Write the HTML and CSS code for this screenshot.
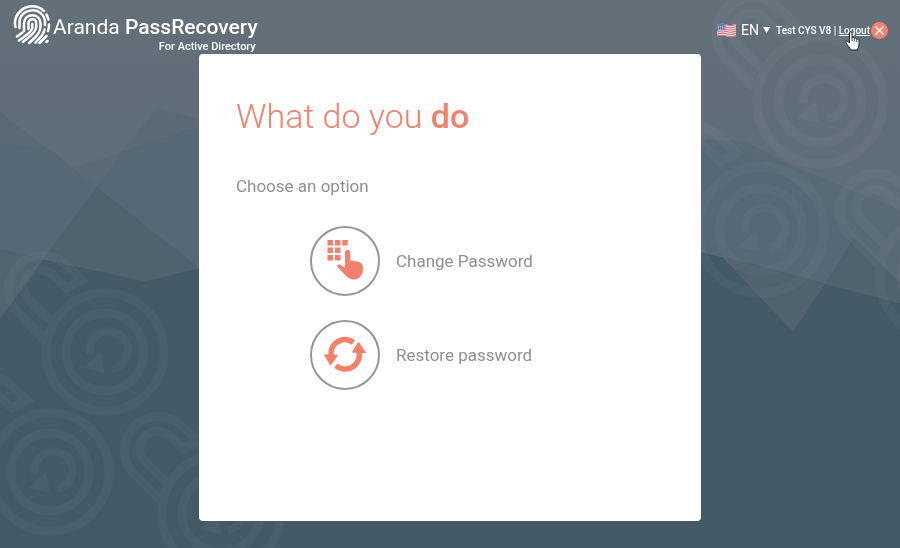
FILE: index.html
```
<!DOCTYPE html>
<html lang="en">
<head>
    <meta charset="UTF-8">
    <meta name="viewport" content="width=device-width, initial-scale=1.0">
    <title>Aranda PassRecovery</title>
    <link rel="stylesheet" href="styles.css">
</head>
<body>

    <!-- Background -->
    <svg class="backdrop" viewBox="0 0 900 548" preserveAspectRatio="xMidYMid slice" aria-hidden="true">
        <defs>
            <linearGradient id="sky" x1="0" y1="0" x2="0" y2="1">
                <stop offset="0" stop-color="#636f79"/>
                <stop offset="1" stop-color="#5c6c78"/>
            </linearGradient>
            <g id="swirl" fill="none" stroke="#fff" stroke-width="9">
                <circle r="59"/>
                <circle r="39"/>
                <path stroke-width="8" d="M7 17A19 19 0 1 0 -15 2"/>
                <path fill="#fff" stroke="none" d="M-22 16L-4 0L0 21Z"/>
                <path d="M-61 -13L-88 -40A34 34 0 0 1 -40 -88L-23 -72L-38 -64L-52 -77A17 17 0 0 0 -76 -52L-55 -31"/>
            </g>
        </defs>
        <rect width="900" height="548" fill="#445a67"/>
        <path fill="url(#sky)" d="M0 0H900V303L760 266L701 252L450 200L199 268L145 281L43 259L0 249Z"/>
        <path fill="#5a6974" d="M0 112L97 187L43 259L0 249Z"/>
        <path fill="#546875" d="M0 144L50 149L97 187L43 259L0 249Z"/>
        <path fill="#5b6a75" d="M97 187L75 168L120 153L157 108L199 119V268Z"/>
        <path fill="#546875" d="M97 187L122 152L199 127V268Z"/>
        <path fill="#4f626e" d="M97 187L199 268L145 281L43 259Z"/>
        <path fill="#51646f" d="M0 249L43 259L14 300L0 318Z"/>
        <path fill="#586a76" d="M701 140L745 141L790 165L900 210V303L760 266L701 252Z"/>
        <path fill="#546875" d="M701 146L745 150L790 180L854 238L825 284L760 266L701 252Z"/>
        <path fill="#4f626e" d="M854 238L900 282V303L825 284Z"/>
        <path fill="#4f626e" d="M722 257L760 266L825 284L793 332Z"/>
        <g opacity=".035">
            <use href="#swirl" x="105" y="352"/>
            <use href="#swirl" x="50" y="472"/>
            <use href="#swirl" x="221" y="513"/>
            <use href="#swirl" transform="translate(820 101) scale(1.07)"/>
            <use href="#swirl" transform="translate(761 230) scale(1.07)"/>
            <use href="#swirl" transform="translate(943 277) scale(1.07)"/>
        </g>
    </svg>

    <!-- Header -->
    <header class="header">
        <div class="brand">
            <svg class="brand-icon" viewBox="0 0 38 42" aria-hidden="true">
                <g fill="none" stroke="#fff" stroke-width="2.5" stroke-linecap="round">
                    <path d="M2.500 23C1 17 3 11 8 6.500C14 1 24 .5 31 7"/>
                    <path d="M33.500 10.500L35.500 15.500"/>
                    <path d="M6.500 24V18C7 3 31 2 32 18V21"/>
                    <path d="M36 20.500C36 23 35.700 25 35 27"/>
                    <path d="M11 27V19C11.500 8.500 27 8.500 27.500 19V23C27 29 24 32 16 39"/>
                    <path d="M31.500 25.500C30.500 30 29 32 22.500 38.500"/>
                    <path d="M15.500 25V19C15.500 14 23.200 14 23.200 19V23C23 27 20 30 10 38"/>
                    <path d="M19.300 20V24C18.500 27.500 15 30 6 36.500"/>
                    <path d="M4 32.500L9.500 28.500"/>
                    <path d="M26.500 39L33.500 32M33.500 38L34.500 37"/>
                </g>
            </svg>
            <div class="brand-text">
                <div class="brand-name">Aranda <strong>PassRecovery</strong></div>
                <div class="brand-sub">For Active Directory</div>
            </div>
        </div>

        <div class="tools">
            <svg class="flag" viewBox="0 0 19 15" aria-hidden="true">
                <path fill="#e9dcdf" d="M0 2Q5 0 9.500 1.500T19 1V13Q14 14.500 9.500 13T0 13Z"/>
                <path fill="none" stroke="#d4757b" stroke-width="1.100" d="M0 2.500Q5 .5 9.500 2T19 1.500M0 4.700Q5 2.700 9.500 4.200T19 3.700M0 6.900Q5 4.900 9.500 6.400T19 5.900M0 9.100Q5 7.100 9.500 8.600T19 8.100M0 11.300Q5 9.300 9.500 10.800T19 10.300M0 13Q5 11.500 9.500 13T19 12.500"/>
                <path fill="#6d7cae" d="M0 2Q5 0 8.500 1.200V7.500Q5 6 0 8Z"/>
                <path fill="none" stroke="#c5cce0" stroke-width=".7" stroke-dasharray="1 1" d="M1 3.500L8 2.800M1 5L8 4.300M1 6.500L8 5.800"/>
            </svg>
            <select class="language" aria-label="Language">
                <option>EN</option>
                <option>ES</option>
            </select>
            <svg class="caret" viewBox="0 0 7 6" aria-hidden="true"><path fill="#fff" d="M0 0H7L3.500 6Z"/></svg>
            <div class="session">Test CYS V8 | <a class="logout" href="#">Logout</a></div>
            <button class="close" type="button" aria-label="Close session">
                <svg viewBox="0 0 17 17" aria-hidden="true">
                    <circle cx="8.500" cy="8.500" r="8.500" fill="#f4836b"/>
                    <path stroke="#fff" stroke-width="1.500" stroke-linecap="round" d="M5 5L12 12M12 5L5 12"/>
                </svg>
            </button>
            <svg class="pointer" viewBox="0 0 15 20" aria-hidden="true">
                <path fill="#fff" stroke="#15202b" stroke-width="1" stroke-linejoin="round" d="M4.500 12V2C4.500 .2 7 .2 7 2V7C7.500 5.800 9.300 6 9.300 7.500C10 6.500 11.700 7 11.700 8.500C12.500 7.700 14 8.300 14 9.800V13.500C14 16 12.500 17 12.500 19H5.500C5 16.500 2.500 14.500 1 11.800C.3 10 2.500 9.500 3.500 11Z"/>
                <path stroke="#15202b" stroke-width=".8" d="M7 7V10M9.300 8V10.500M11.700 9V11"/>
            </svg>
        </div>
    </header>

    <!-- Options -->
    <main class="card">
        <h1>What do you <strong>do</strong></h1>
        <p class="hint">Choose an option</p>
        <div class="options">
            <button class="option" type="button">
                <span class="option-icon">
                    <svg viewBox="2 2 66 66" aria-hidden="true">
                        <g fill="#f4806a">
                            <path d="M17.500 14h5.500v5.500h-5.500zM25 14h5.500v5.500h-5.500zM32.300 14h5.500v5.500h-5.500zM17.500 21.500h5.500v5.500h-5.500zM25 21.500h5.500v5.500h-5.500zM17.500 29h5.500v5.500h-5.500zM25 29h5.500v5.500h-5.500z"/>
                            <path d="M35 42V26.500C35 22.800 40.200 22.800 40.200 26.500V34.500L47 35.500C51 36 53 38.500 53 42C53 46 52 49 49.500 51.500C46 54.500 41 54 38 51.500C34 48.500 31 44 27.500 41C26.500 39 28.500 38 30.500 39Z"/>
                        </g>
                    </svg>
                </span>
                Change Password
            </button>
            <button class="option" type="button">
                <span class="option-icon">
                    <svg viewBox="2 2 66 66" aria-hidden="true">
                        <g fill="none" stroke="#f4806a" stroke-width="5.500">
                            <path d="M43.500 22.500A14 14 0 0 0 21 35"/>
                            <path d="M26 45.500A14 14 0 0 0 49 32"/>
                        </g>
                        <g fill="#f4806a" stroke="#f4806a" stroke-width="1.500" stroke-linejoin="round">
                            <path d="M15 35L27 35.500L20.500 44.500Z"/>
                            <path d="M48.500 23L55 32.500L43 32Z"/>
                        </g>
                    </svg>
                </span>
                Restore password
            </button>
        </div>
    </main>

</body>
</html>
```
FILE: styles.css
```
* {
    margin: 0;
    padding: 0;
    box-sizing: border-box;
}
body {
    min-height: 100vh;
    background: #445a67;
    color: #8f8f8f;
    font-family: Roboto, "Liberation Sans", sans-serif;
}
button, select {
    border: none;
    background: none;
    color: inherit;
    font-family: inherit;
    cursor: pointer;
}
svg {
    display: block;
}

/* Background */
.backdrop {
    position: fixed;
    top: 0;
    left: 0;
    z-index: -1;
    width: 100%;
    height: 100%;
}

/* Header */
.header {
    display: flex;
    justify-content: space-between;
    align-items: flex-start;
    padding: 4px 12px 0 13px;
    color: #fff;
}
.brand {
    display: flex;
    height: 50px;
}
.brand-icon {
    width: 38px;
    height: 42px;
}
.brand-text {
    padding: 9px 0 0 2px;
}
.brand-name {
    font-size: 21px;
    line-height: 28px;
}
.brand-name strong {
    font-weight: 500;
}
.brand-sub {
    padding-right: 2px;
    font-size: 11px;
    font-weight: 500;
    line-height: 12px;
    text-align: right;
}
.tools {
    position: relative;
    display: flex;
    align-items: center;
    padding-top: 16px;
}
.flag {
    width: 19px;
    height: 15px;
    margin-right: 5px;
}
.language {
    appearance: none;
    font-size: 14px;
    line-height: 20px;
}
.caret {
    width: 7px;
    height: 6px;
    margin: 0 6px 0 4px;
}
.session {
    font-size: 10px;
    font-weight: 500;
}
.logout {
    color: inherit;
}
.close {
    width: 17px;
    height: 17px;
    margin-left: 1px;
}
.pointer {
    position: absolute;
    top: 27px;
    right: 28px;
    width: 15px;
    height: 20px;
}

/* Options card */
.card {
    max-width: 502px;
    margin: 0 auto 27px;
    padding: 40px 37px 131px;
    background: #fff;
    border-radius: 4px;
}
h1 {
    color: #f4806a;
    font-size: 34px;
    font-weight: 300;
    line-height: 44px;
}
h1 strong {
    font-weight: 500;
}
.hint {
    margin-top: 36px;
    font-size: 17px;
    line-height: 24px;
}
.options {
    display: flex;
    flex-direction: column;
    align-items: flex-start;
    gap: 24px;
    margin-top: 28px;
    padding-left: 74px;
}
.option {
    display: flex;
    align-items: center;
    gap: 16px;
    font-size: 17px;
    line-height: 24px;
}
.option-icon {
    width: 70px;
    height: 70px;
    border: 2px solid #969696;
    border-radius: 50%;
}
.option:hover .option-icon {
    border-color: #f4806a;
}
```
